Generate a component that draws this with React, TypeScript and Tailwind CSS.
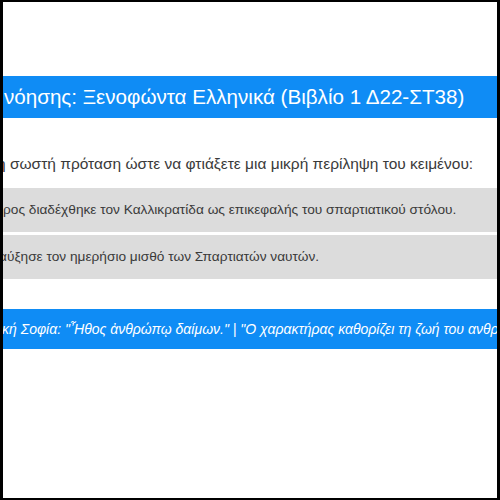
export default function App() {
  return (
    <div className="box-border h-[500px] w-[500px] overflow-hidden border-x-[3px] border-y-2 border-black bg-white">
      <div className="flex flex-col pt-[74px]">
        {/* title bar */}
        <div className="flex h-[42px] items-center overflow-hidden whitespace-nowrap bg-[#0f8cf5] pl-[1px] font-['Liberation_Sans',Arial,sans-serif] text-[20.6px] text-white">
          νόησης: Ξενοφώντα Ελληνικά (Βιβλίο 1 Δ22-ΣΤ38)
        </div>

        {/* instruction */}
        <div className="mt-[22px] flex h-[48px] items-center overflow-hidden whitespace-nowrap font-['Liberation_Sans',Arial,sans-serif] text-[15.5px] text-[#3a3a3a]">
          <span className="-ml-[6px]">η σωστή πρόταση ώστε να φτιάξετε μια μικρή περίληψη του κειμένου:</span>
        </div>

        {/* options */}
        <div className="flex flex-col gap-[3px]">
          <div className="flex h-[44px] items-center overflow-hidden whitespace-nowrap bg-[#dcdcdc] font-['Liberation_Sans',Arial,sans-serif] text-[13.7px] text-[#3a3a3a]">
            ρος διαδέχθηκε τον Καλλικρατίδα ως επικεφαλής του σπαρτιατικού στόλου.
          </div>
          <div className="flex h-[44px] items-center overflow-hidden whitespace-nowrap bg-[#dcdcdc] font-['Liberation_Sans',Arial,sans-serif] text-[13.7px] text-[#3a3a3a]">
            <span className="-ml-[4px]">αύξησε τον ημερήσιο μισθό των Σπαρτιατών ναυτών.</span>
          </div>
        </div>

        {/* quote bar */}
        <div className="mt-[30px] flex h-[40px] items-center overflow-hidden whitespace-nowrap bg-[#0f8cf5] font-['Liberation_Sans',Arial,sans-serif] text-[14px] italic text-white">
          <span className="-ml-[4px]">ική Σοφία: "Ἦθος ἀνθρώπῳ δαίμων." | "Ο χαρακτήρας καθορίζει τη ζωή του ανθρώπου."</span>
        </div>
      </div>
    </div>
  );
}
